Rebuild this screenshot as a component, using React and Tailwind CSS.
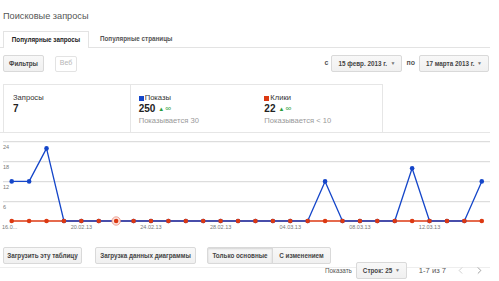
import React from 'react';
import { ChevronLeft, ChevronRight } from 'lucide-react';

const blue = [12, 12, 22, 0, 0, 0, 0, 0, 0, 0, 0, 0, 0, 0, 0, 0, 0, 0, 12, 0, 0, 0, 0, 16, 0, 0, 0, 12];
const xAt = (i) => 11.7 + i * 17.41;
const yAt = (v) => 84 - v * 3.3;

const xLabels = [
    { i: 0, t: '16.0...' },
    { i: 4, t: '20.02.13' },
    { i: 8, t: '24.02.13' },
    { i: 12, t: '28.02.13' },
    { i: 16, t: '04.03.13' },
    { i: 20, t: '08.03.13' },
    { i: 24, t: '12.03.13' },
];

function Btn({ children, className = '' }) {
    return (
        <div
            className={`flex h-[17px] items-center whitespace-nowrap rounded-[2px] border border-[#d9d9d9] bg-gradient-to-b from-[#f8f8f8] to-[#f0f0f0] px-[6px] text-[6.3px] font-bold text-[#444] ${className}`}
        >
            {children}
        </div>
    );
}

function Chart() {
    const bluePts = blue.map((v, i) => `${xAt(i)},${yAt(v)}`).join(' ');
    const redPts = blue.map((_, i) => `${xAt(i)},${yAt(0)}`).join(' ');
    return (
        <svg width="492" height="96" className="block">
            {[4.7, 24.7, 44.7, 64.7].map((y) => (
                <line key={y} x1="3" x2="490" y1={y} y2={y} stroke="#d6d6d6" strokeWidth="1" />
            ))}
            {[
                [4.7, '24'],
                [24.7, '18'],
                [44.7, '12'],
                [64.7, '6'],
            ].map(([y, t]) => (
                <text key={t} x="3" y={y + 7} fontSize="5.5" fill="#777" fontFamily="Liberation Sans, Arial, sans-serif">
                    {t}
                </text>
            ))}
            <polyline points={redPts} fill="none" stroke="#dc3912" strokeWidth="1.3" />
            <polyline points={bluePts} fill="none" stroke="#1546c9" strokeWidth="1.3" strokeLinejoin="round" />
            {blue.map((v, i) => (
                <circle key={`b${i}`} cx={xAt(i)} cy={yAt(v)} r="2.3" fill="#1546c9" />
            ))}
            <circle cx={xAt(6)} cy={yAt(0)} r="4.2" fill="#fbe3de" stroke="#e99080" strokeWidth="0.8" />
            {blue.map((_, i) => (
                <circle key={`r${i}`} cx={xAt(i)} cy={yAt(0)} r="2.3" fill="#dc3912" />
            ))}
            {xLabels.map((l) => (
                <text
                    key={l.t}
                    x={l.i === 0 ? 2 : xAt(l.i)}
                    y="92"
                    fontSize="5.5"
                    fill="#777"
                    textAnchor={l.i === 0 ? 'start' : 'middle'}
                    fontFamily="Liberation Sans, Arial, sans-serif"
                >
                    {l.t}
                </text>
            ))}
        </svg>
    );
}

function Stat({ color, label, value, note }) {
    return (
        <div className="w-[126px] pl-[8px] pt-[8px]">
            <div className="flex items-center text-[7.6px] leading-[10px] text-[#333]">
                <span className={`mr-[1px] inline-block h-[5px] w-[5px] ${color}`} />
                {label}
            </div>
            <div className="flex items-center text-[10px] font-bold leading-[12px] text-[#222]">
                {value}
                <span className="ml-[3px] text-[6px] text-[#2a9d3a]">▲</span>
                <span className="ml-[1px] text-[8px] font-normal text-[#2a9d3a]">∞</span>
            </div>
            <div className="mt-[1px] text-[7.6px] leading-[10px] text-[#999]">{note}</div>
        </div>
    );
}

export default function App() {
    return (
        <div className="h-[281px] w-[499px] overflow-hidden bg-white font-['Liberation_Sans',Arial,sans-serif] text-[#444]">
            <div className="pl-[3px] pt-[10px] text-[9.2px] leading-[12px] text-[#555]">Поисковые запросы</div>

            <div className="mr-[9px] mt-[9px] flex border-b border-[#e3e3e3]">
                <div className="-mb-px ml-[3px] flex h-[17px] w-[86px] items-center justify-center whitespace-nowrap border border-b-0 border-[#e3e3e3] bg-white text-[6.3px] font-bold text-[#222]">
                    Популярные запросы
                </div>
                <div className="flex h-[16px] items-center whitespace-nowrap px-[11px] text-[6.3px] font-bold text-[#555]">
                    Популярные страницы
                </div>
            </div>

            <div className="mr-[10px] mt-[7px] flex items-center pl-[3px]">
                <Btn className="w-[41px] justify-center">Фильтры</Btn>
                <div className="ml-[11px] flex h-[16px] w-[22px] items-center justify-center rounded-[2px] border border-[#e3e3e3] text-[7px] text-[#b5b5b5]">
                    Веб
                </div>
                <div className="flex-1" />
                <span className="mr-[3px] text-[7px] font-bold text-[#555]">с</span>
                <Btn className="w-[71px] justify-between">
                    <span>15 февр. 2013 г.</span>
                    <span className="text-[5px] text-[#777]">▼</span>
                </Btn>
                <span className="mx-[4px] text-[7px] font-bold text-[#555]">по</span>
                <Btn className="w-[70px] justify-between">
                    <span>17 марта 2013 г.</span>
                    <span className="text-[5px] text-[#777]">▼</span>
                </Btn>
            </div>

            <div className="mr-[9px] mt-[12px] flex border-b border-[#e6e6e6] pl-[3px]">
                <div className="flex w-[380px] border border-b-0 border-[#e6e6e6]">
                    <div className="h-[47px] w-[127px] border-r border-[#e6e6e6] pl-[9px] pt-[8px]">
                        <div className="text-[7.6px] leading-[10px] text-[#333]">Запросы</div>
                        <div className="text-[10px] font-bold leading-[12px] text-[#222]">7</div>
                    </div>
                    <Stat color="bg-[#1546c9]" label="Показы" value="250" note="Показывается 30" />
                    <Stat color="bg-[#dc3912]" label="Клики" value="22" note="Показывается < 10" />
                </div>
            </div>

            <div className="mt-[4px]">
                <Chart />
            </div>

            <div className="mr-[9px] mt-[14px] flex items-center border-b border-[#eee] pb-[3px] pl-[3px]">
                <Btn className="w-[79px] justify-center">Загрузить эту таблицу</Btn>
                <Btn className="ml-[13px] w-[101px] justify-center">Загрузка данных диаграммы</Btn>
                <Btn className="ml-[11px] w-[66px] justify-center rounded-r-none border-[#c8c8c8] from-[#e4e4e4] to-[#e4e4e4] text-[#222] shadow-[inset_0_1px_2px_rgba(0,0,0,0.15)]">
                    Только основные
                </Btn>
                <Btn className="-ml-px w-[59px] justify-center rounded-l-none">С изменением</Btn>
            </div>

            <div className="-mt-[6px] mr-[14px] flex items-center justify-end">
                <span className="mr-[4px] text-[6.3px] text-[#555]">Показать</span>
                <Btn className="w-[51px] justify-between">
                    <span>Строк: 25</span>
                    <span className="text-[5px] text-[#777]">▼</span>
                </Btn>
                <span className="ml-[12px] text-[7.6px] text-[#555]">1-7 из 7</span>
                <ChevronLeft size={11} strokeWidth={1.5} className="ml-[9px] text-[#bbb]" />
                <ChevronRight size={11} strokeWidth={1.5} className="ml-[8px] text-[#777]" />
            </div>
        </div>
    );
}
